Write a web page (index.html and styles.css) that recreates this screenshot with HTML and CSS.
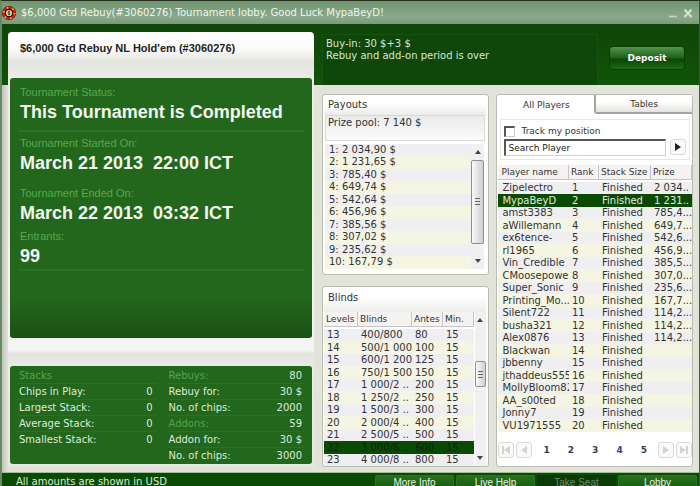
FILE: index.html
```html
<!DOCTYPE html>
<html lang="en">
<head>
  <meta charset="UTF-8" />
  <meta name="viewport" content="width=device-width, initial-scale=1.0"/>
  <title>Tournament lobby</title>
  <link rel="stylesheet" href="styles.css">
</head>
<body>
  <div class="window">
    <header class="titlebar">
      <svg class="logo" viewBox="0 0 14 14">
        <circle cx="7" cy="7" r="7" fill="#3a1408"/>
        <circle cx="7" cy="7" r="5.4" fill="none" stroke="#d3230f" stroke-width="2.4"/>
        <circle cx="7" cy="7" r="5.4" fill="none" stroke="#f2b83a" stroke-width="2" stroke-dasharray="1.4 4.25"/>
        <circle cx="7" cy="7" r="4.2" fill="#1c0f08"/>
        <circle cx="7" cy="7" r="3.1" fill="#e8dcae"/>
        <path d="M8.3 5.9C7.6 5.1 5.9 5.3 6 6.2C6.1 7.1 8.1 6.8 8.1 7.9C8 8.8 6.4 8.8 5.7 8M7 4.7V9.3" fill="none" stroke="#3b2a12" stroke-width=".8"/>
      </svg>
      <h1>$6,000 Gtd Rebuy(#3060276) Tournament lobby. Good Luck MypaBeyD!</h1>
      <button class="win-btn" aria-label="Minimize"><svg viewBox="0 0 10 10"><path d="M1 8.5H9" stroke="#c3d6c0" stroke-width="1.6"/></svg></button>
      <button class="win-btn" aria-label="Close"><svg viewBox="0 0 10 10"><path d="M1.5 1.5L8.5 9M8.5 1.5L1.5 9" stroke="#d3e2d0" stroke-width="2"/></svg></button>
    </header>

    <main class="content">
      <!-- Tournament info -->
      <section class="summary">
        <h2>$6,000 Gtd Rebuy NL Hold'em (#3060276)</h2>
        <dl class="status">
          <div class="status-item ruled">
            <dt>Tournament Status:</dt>
            <dd>This Tournament is Completed</dd>
          </div>
          <div class="status-item spaced">
            <dt>Tournament Started On:</dt>
            <dd>March 21 2013&nbsp; 22:00 ICT</dd>
          </div>
          <div class="status-item">
            <dt>Tournament Ended On:</dt>
            <dd>March 22 2013&nbsp; 03:32 ICT</dd>
          </div>
          <div class="status-item ruled last">
            <dt>Entrants:</dt>
            <dd>99</dd>
          </div>
        </dl>
        <div class="stacks">
          <dl>
            <div class="accent"><dt>Stacks</dt></div>
            <div><dt>Chips in Play:</dt><dd>0</dd></div>
            <div><dt>Largest Stack:</dt><dd>0</dd></div>
            <div><dt>Average Stack:</dt><dd>0</dd></div>
            <div><dt>Smallest Stack:</dt><dd>0</dd></div>
          </dl>
          <dl>
            <div class="accent"><dt>Rebuys:</dt><dd>80</dd></div>
            <div><dt>Rebuy for:</dt><dd>30 $</dd></div>
            <div><dt>No. of chips:</dt><dd>2000</dd></div>
            <div class="accent"><dt>Addons:</dt><dd>59</dd></div>
            <div><dt>Addon for:</dt><dd>30 $</dd></div>
            <div><dt>No. of chips:</dt><dd>3000</dd></div>
          </dl>
        </div>
      </section>

      <div class="details">
        <div class="banner">
          <p class="buyin">Buy-in: 30 $+3 $<br>Rebuy and add-on period is over</p>
          <button class="deposit">Deposit</button>
        </div>

        <div class="panels">
          <div class="side">
            <section class="panel payouts">
              <h3>Payouts</h3>
              <p class="prize-pool">Prize pool: 7 140 $</p>
              <div class="scroll-area">
                <ul class="payout-list">
                  <li>1: 2 034,90 $</li>
                  <li>2: 1 231,65 $</li>
                  <li>3: 785,40 $</li>
                  <li>4: 649,74 $</li>
                  <li>5: 542,64 $</li>
                  <li>6: 456,96 $</li>
                  <li>7: 385,56 $</li>
                  <li>8: 307,02 $</li>
                  <li>9: 235,62 $</li>
                  <li>10: 167,79 $</li>
                </ul>
                <div class="scrollbar">
                  <button class="arrow" aria-label="Scroll up"><svg viewBox="0 0 6 4"><path d="M0 4L3 0L6 4Z"/></svg></button>
                  <div class="track"><div class="thumb tall"></div></div>
                  <button class="arrow" aria-label="Scroll down"><svg viewBox="0 0 6 4"><path d="M0 0L3 4L6 0Z"/></svg></button>
                </div>
              </div>
            </section>

            <section class="panel blinds">
              <h3>Blinds</h3>
              <div class="scroll-area">
                <table class="blinds-table">
                  <colgroup><col class="c-level"><col class="c-blind"><col class="c-ante"><col></colgroup>
                  <thead>
                    <tr><th>Levels</th><th>Blinds</th><th>Antes</th><th>Min.</th></tr>
                  </thead>
                  <tbody>
                    <tr><td>13</td><td>400/800</td><td>80</td><td>15</td></tr>
                    <tr><td>14</td><td>500/1 000</td><td>100</td><td>15</td></tr>
                    <tr><td>15</td><td>600/1 200</td><td>125</td><td>15</td></tr>
                    <tr><td>16</td><td>750/1 500</td><td>150</td><td>15</td></tr>
                    <tr><td>17</td><td>1 000/2 ..</td><td>200</td><td>15</td></tr>
                    <tr><td>18</td><td>1 250/2 ..</td><td>250</td><td>15</td></tr>
                    <tr><td>19</td><td>1 500/3 ..</td><td>300</td><td>15</td></tr>
                    <tr><td>20</td><td>2 000/4 ..</td><td>400</td><td>15</td></tr>
                    <tr><td>21</td><td>2 500/5 ..</td><td>500</td><td>15</td></tr>
                    <tr class="current"><td>22</td><td>3 000/6 ..</td><td>600</td><td>15</td></tr>
                    <tr><td>23</td><td>4 000/8 ..</td><td>800</td><td>15</td></tr>
                  </tbody>
                </table>
                <div class="scrollbar">
                  <button class="arrow" aria-label="Scroll up"><svg viewBox="0 0 6 4"><path d="M0 4L3 0L6 4Z"/></svg></button>
                  <div class="track middle"><div class="thumb"></div></div>
                  <button class="arrow" aria-label="Scroll down"><svg viewBox="0 0 6 4"><path d="M0 0L3 4L6 0Z"/></svg></button>
                </div>
              </div>
            </section>
          </div>

          <section class="players">
            <div class="tabs">
              <button class="tab active">All Players</button>
              <button class="tab">Tables</button>
            </div>
            <form class="search">
              <label class="track-me"><input type="checkbox">Track my position</label>
              <div class="search-row">
                <input type="text" value="Search Player" aria-label="Search Player">
                <button type="button" class="go" aria-label="Search"><svg viewBox="0 0 6 8"><path d="M0 0L6 4L0 8Z"/></svg></button>
              </div>
            </form>
            <table class="players-table">
              <colgroup><col><col class="c-rank"><col class="c-stack"><col class="c-prize"></colgroup>
              <thead>
                <tr><th>Player name</th><th>Rank</th><th>Stack Size</th><th>Prize</th></tr>
              </thead>
              <tbody>
                <tr><td>Zipelectro</td><td>1</td><td>Finished</td><td>2 034..</td></tr>
                <tr class="me"><td>MypaBeyD</td><td>2</td><td>Finished</td><td>1 231..</td></tr>
                <tr><td>amst3383</td><td>3</td><td>Finished</td><td>785,4...</td></tr>
                <tr><td>aWillemann</td><td>4</td><td>Finished</td><td>649,7...</td></tr>
                <tr><td>ex6tence-</td><td>5</td><td>Finished</td><td>542,6...</td></tr>
                <tr><td>rl1965</td><td>6</td><td>Finished</td><td>456,9...</td></tr>
                <tr><td>Vin_Credible</td><td>7</td><td>Finished</td><td>385,5...</td></tr>
                <tr><td>CMoosepowe</td><td>8</td><td>Finished</td><td>307,0...</td></tr>
                <tr><td>Super_Sonic</td><td>9</td><td>Finished</td><td>235,6...</td></tr>
                <tr><td>Printing_Mo...</td><td>10</td><td>Finished</td><td>167,7...</td></tr>
                <tr><td>Silent722</td><td>11</td><td>Finished</td><td>114,2...</td></tr>
                <tr><td>busha321</td><td>12</td><td>Finished</td><td>114,2...</td></tr>
                <tr><td>Alex0876</td><td>13</td><td>Finished</td><td>114,2...</td></tr>
                <tr><td>Blackwan</td><td>14</td><td>Finished</td><td></td></tr>
                <tr><td>jbbenny</td><td>15</td><td>Finished</td><td></td></tr>
                <tr><td>jthaddeus555</td><td>16</td><td>Finished</td><td></td></tr>
                <tr><td>MollyBloom82</td><td>17</td><td>Finished</td><td></td></tr>
                <tr><td>AA_s00ted</td><td>18</td><td>Finished</td><td></td></tr>
                <tr><td>Jonny7</td><td>19</td><td>Finished</td><td></td></tr>
                <tr><td>VU1971555</td><td>20</td><td>Finished</td><td></td></tr>
              </tbody>
            </table>
            <nav class="pager">
              <button class="step" aria-label="First page"><svg viewBox="0 0 8 8"><path d="M0 0H2V8H0ZM8 0V8L2 4Z"/></svg></button>
              <button class="step" aria-label="Previous page"><svg viewBox="0 0 8 8"><path d="M7 0V8L1 4Z"/></svg></button>
              <div class="pages">
                <a href="#">1</a>
                <a href="#">2</a>
                <a href="#">3</a>
                <a href="#" class="visited">4</a>
                <a href="#">5</a>
              </div>
              <button class="step" aria-label="Next page"><svg viewBox="0 0 8 8"><path d="M1 0L7 4L1 8Z"/></svg></button>
              <button class="step" aria-label="Last page"><svg viewBox="0 0 8 8"><path d="M0 0L6 4L0 8ZM6 0H8V8H6Z"/></svg></button>
            </nav>
          </section>
        </div>
      </div>
    </main>

    <footer class="footer">
      <p>All amounts are shown in USD</p>
      <div class="actions">
        <button>More Info</button>
        <button>Live Help</button>
        <button disabled>Take Seat</button>
        <button>Lobby</button>
      </div>
    </footer>
  </div>
</body>
</html>
```
FILE: styles.css
```css
* {
  box-sizing: border-box;
  margin: 0;
  padding: 0;
}

body {
  font-family: "DejaVu Sans", Verdana, sans-serif;
  font-size: 10px;
  line-height: 12px;
  color: #333;
  background: #222;
}

button, input {
  font: inherit;
  color: inherit;
}

button {
  border: none;
  background: none;
  cursor: pointer;
}

.window {
  display: flex;
  flex-direction: column;
  min-height: 100vh;
  border-top: 1px solid #26301f;
  border-left: 2px solid #668a64;
  border-right: 1px solid #3c5a38;
}

/* Title bar */
.titlebar {
  display: flex;
  align-items: center;
  gap: 5px;
  height: 23px;
  padding-right: 6px;
  background: linear-gradient(#709470, #8aa98a 70%, #799b78);
  color: #eef5ec;
}

.logo {
  width: 14px;
  height: 14px;
}

.titlebar h1 {
  flex: 1;
  font-size: 10px;
  font-weight: normal;
}

.win-btn {
  width: 10px;
  height: 10px;
}

.win-btn svg {
  display: block;
}

/* Main area, the green band runs behind the top of the columns */
.content {
  flex: 1;
  display: flex;
  gap: 8px;
  padding: 0 6px 5px;
  background:
    linear-gradient(90deg, rgba(0, 0, 0, .14), transparent 6px) 0 61px no-repeat,
    linear-gradient(#0e4508, #115409 61px, #e2e4d9 61px, #e2e4d9);
}

.summary {
  flex: 302;
  min-width: 0;
  margin-top: 8px;
  padding: 0 2px;
  border-radius: 4px 4px 0 0;
  background: linear-gradient(#fff, #fafafa 18px, #e2e4de 30px, #ecece9 46px, #f4f4f2 300px, #f4f4f3 318px, #e2e3de 322px, #ebebe7 336px, #e8e8e2);
}

.summary h2 {
  height: 46px;
  padding: 9px 10px 0;
  font: bold 11px/14px "Liberation Sans", Arial, sans-serif;
  color: #222;
}

.status {
  height: 260px;
  padding: 7px 8px 0;
  border-radius: 3px;
  background: linear-gradient(#23671c, #23671c 220px, #1c5015);
  font-family: "Liberation Sans", Arial, sans-serif;
}

.status-item {
  padding: 0 2px 3px;
}

.status-item.ruled {
  padding-bottom: 5px;
  border-bottom: 2px solid #2c7225;
}

.status-item.ruled.last {
  padding-bottom: 0;
}

.status-item.spaced {
  padding-top: 4px;
  padding-bottom: 10px;
}

.status dt {
  font-size: 11px;
  line-height: 14px;
  color: #57a84e;
}

.status dd {
  font-size: 18px;
  font-weight: bold;
  line-height: 26px;
  color: #f2f7f0;
}

.stacks {
  display: flex;
  gap: 10px;
  margin-top: 28px;
  padding: 2px 6px 0 7px;
  height: 98px;
  border-radius: 3px;
  background: #23671c;
  color: #dcebd9;
}

.stacks dl {
  flex: 1;
}

.stacks dl div {
  display: flex;
  justify-content: space-between;
  padding: 0 4px 0 2px;
  line-height: 15px;
  border-bottom: 1px solid #2b7024;
}

.stacks dl div:last-child {
  border-bottom: none;
}

.accent dt {
  color: #55a34c;
}

/* Banner */
.details {
  flex: 371;
  min-width: 0;
  display: flex;
  flex-direction: column;
}

.banner {
  display: flex;
  align-items: center;
  gap: 11px;
  height: 61px;
  padding: 10px 8px 0 0;
}

.buyin {
  flex: 1;
  align-self: stretch;
  padding: 3px;
  border: 1px solid #165210;
  border-bottom: none;
  background: #0f4609;
  color: #d8e6d4;
}

.deposit {
  width: 76px;
  height: 24px;
  margin-bottom: 4px;
  border: 1px solid #0b3d06;
  border-radius: 4px;
  background: linear-gradient(#549350, #1d6116 50%, #0a4503 55%, #1e6a17);
  font-size: 9px;
  font-weight: bold;
  color: #fff;
}

/* Panels */
.panels {
  flex: 1;
  display: flex;
  gap: 7px;
  padding-top: 9px;
}

.side {
  flex: 167;
  display: flex;
  flex-direction: column;
  gap: 11px;
  min-width: 0;
}

.panel,
.players {
  border: 1px solid #b9bcb0;
  border-radius: 3px;
  background: #fff;
  min-width: 0;
}

.panel {
  padding: 0 2px 0 1px;
}

.panel h3 {
  padding: 4px;
  font-size: 10px;
  font-weight: normal;
  line-height: 12px;
  background: linear-gradient(#fff 40%, #ececea);
}

.prize-pool {
  height: 26px;
  margin: 0 1px 3px;
  padding: 1px 2px;
  border: 1px solid #d9d9d5;
  background: linear-gradient(#eaeae9, #fbfbfb);
}

.payouts {
  padding-bottom: 5px;
}

.payouts .scroll-area {
  padding: 0 2px 0 1px;
}

.scroll-area {
  display: flex;
}

.payout-list {
  flex: 1;
  list-style: none;
}

.payout-list li {
  height: 12px;
  padding-left: 4px;
  background: #efeff1;
}

.payout-list li:nth-child(even) {
  height: 13px;
  background: #f5f5e4;
}

.scrollbar {
  display: flex;
  flex-direction: column;
  width: 13px;
  background: #f0f0f0;
}

.arrow {
  display: flex;
  align-items: center;
  justify-content: center;
  height: 16px;
}

.arrow svg {
  width: 6px;
  height: 4px;
  fill: #444;
}

.track {
  flex: 1;
  display: flex;
  flex-direction: column;
}

.track.middle {
  justify-content: center;
  padding-bottom: 30px;
}

.thumb {
  height: 26px;
  border: 1px solid #8f8f8f;
  border-radius: 2px;
  background:
    repeating-linear-gradient(#666 0 1px, transparent 1px 3px) center / 5px 7px no-repeat,
    linear-gradient(90deg, #fafafa, #cfcfd2);
}

.thumb.tall {
  height: 90%;
}

/* Tables */
table {
  width: 100%;
  table-layout: fixed;
  border-collapse: separate;
  border-spacing: 0;
}

th {
  height: 15px;
  padding-left: 2px;
  border-right: 1px solid #c9c4c4;
  border-bottom: 1px solid #c9c4c4;
  background: #f5f2f2;
  font-size: 9px;
  font-weight: normal;
  text-align: left;
  white-space: nowrap;
}

tbody::before {
  content: "";
  display: table-row;
  height: 2px;
}

td {
  height: 12px;
  padding-left: 3px;
  overflow: hidden;
  white-space: nowrap;
  background: #efeff1;
}

tr:nth-child(even) td {
  height: 13px;
  background: #f5f5e4;
}

.blinds h3 {
  height: 25px;
  padding-top: 5px;
}

.blinds .scrollbar {
  margin-left: 1px;
}

.c-level { width: 34px; }
.c-blind { width: 54px; }
.c-ante { width: 31px; }
.c-rank { width: 30px; }
.c-stack { width: 52px; }
.c-prize { width: 41px; }

tr.current td {
  background: #0a4a03;
  color: #06260a;
}

tr.me td {
  background: #0a4a03;
  color: #e0ecdd;
}

/* Players */
.players {
  flex: 193;
  display: flex;
  flex-direction: column;
  padding: 0 0 0 1px;
}

.players th:first-child {
  padding-left: 3px;
}

.players td:first-child {
  padding-left: 4px;
}

.tabs {
  display: flex;
  height: 19px;
}

.tab {
  flex: 1;
  font-size: 9px;
}

.tab:not(.active) {
  border-left: 2px solid #a5a79f;
  border-bottom: 2px solid #a5a79f;
  border-radius: 0 0 0 3px;
  background: linear-gradient(#fff 40%, #e3e4de);
}

.search {
  margin: 5px 2px;
  padding: 5px 3px 3px;
  border: 1px solid #e6e6e4;
  font-size: 9px;
}

.track-me {
  display: flex;
  align-items: center;
  gap: 6px;
}

.track-me input {
  appearance: none;
  width: 11px;
  height: 11px;
  border: 1px solid #c8c8c4;
  border-top: 2px solid #555;
  border-left: 2px solid #555;
  background: #fff;
}

.search-row {
  display: flex;
  gap: 4px;
  margin-top: 2px;
}

.search-row input {
  flex: 1;
  min-width: 0;
  height: 17px;
  padding: 0 2px;
  border: 1px solid #d0d0cc;
  border-top: 2px solid #555;
  border-left: 2px solid #555;
  color: #222;
}

.go,
.step {
  display: flex;
  align-items: center;
  justify-content: center;
  width: 16px;
  height: 16px;
  border: 1px solid #d9dad5;
  border-radius: 3px;
  background: #fafaf8;
}

.go svg {
  width: 6px;
  height: 8px;
  fill: #222;
}

.pager {
  display: flex;
  align-items: center;
  gap: 2px;
  margin: auto 0 8px;
}

.step svg {
  width: 8px;
  height: 8px;
  fill: #d3d4cf;
}

.pages {
  flex: 1;
  display: flex;
  justify-content: space-around;
}

.pages a {
  font-size: 9px;
  font-weight: bold;
  color: #344054;
  text-decoration: none;
}

.pages a.visited {
  color: #39369a;
}

/* Footer */
.footer {
  display: flex;
  justify-content: space-between;
  padding: 2px 2px 0 14px;
  border-top: 1px solid #9fbf98;
  background: #0a4a03;
  color: #dcebd9;
}

.footer p {
  line-height: 14px;
}

.actions {
  display: flex;
  gap: 2px;
}

.actions button {
  width: 79px;
  height: 14px;
  border: 1px solid #2b7324;
  border-bottom: none;
  border-radius: 2px 2px 0 0;
  background: linear-gradient(#28701f, #155a0d);
  font-size: 10px;
  font-family: "Liberation Sans", Arial, sans-serif;
  color: #e8f2e5;
}

.actions button:disabled {
  border-color: #0a3a05;
  background: #0a3a05;
  color: #6f8a6b;
}
```
